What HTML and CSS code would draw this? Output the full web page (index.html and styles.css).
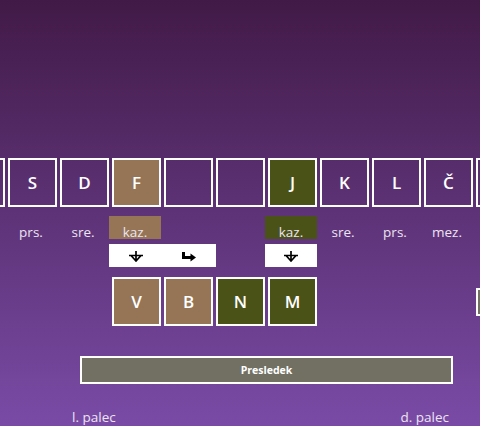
FILE: index.html
```html
<!DOCTYPE html>
<html lang="sl">
<head>
    <meta charset="UTF-8">
    <meta name="viewport" content="width=device-width, initial-scale=1.0">
    <title>Tipkovnica</title>
    <link rel="stylesheet" href="styles.css">
</head>
<body>

    <div class="keyboard">
        <!-- domaca vrsta -->
        <div class="keys home">
            <div class="key"></div>
            <div class="key">S</div>
            <div class="key">D</div>
            <div class="key brown">F</div>
            <div class="key"></div>
            <div class="key"></div>
            <div class="key olive">J</div>
            <div class="key">K</div>
            <div class="key">L</div>
            <div class="key">Č</div>
            <div class="key"></div>
        </div>

        <div class="labels">
            <div class="label"></div>
            <div class="label">prs.</div>
            <div class="label">sre.</div>
            <div class="label brown">kaz.</div>
            <div class="label"></div>
            <div class="label"></div>
            <div class="label olive">kaz.</div>
            <div class="label">sre.</div>
            <div class="label">prs.</div>
            <div class="label">mez.</div>
            <div class="label"></div>
        </div>

        <div class="arrows">
            <div class="arrow-box wide">
                <span class="arrow">
                    <svg width="16" height="11" viewBox="0 0 16 11"><path d="M8 0V10M1 4.5H15M3 4.5L8 10L13 4.5" fill="none" stroke="#000" stroke-width="1.7"/></svg>
                </span>
                <span class="arrow">
                    <svg width="16" height="10" viewBox="0 0 16 10"><path d="M2.5 0V5.5H10" fill="none" stroke="#000" stroke-width="3"/><path d="M9.5 1.5L15 5.5L9.5 9.5Z" fill="#000"/></svg>
                </span>
            </div>
            <div class="arrow-box single">
                <span class="arrow">
                    <svg width="16" height="11" viewBox="0 0 16 11"><path d="M8 0V10M1 4.5H15M3 4.5L8 10L13 4.5" fill="none" stroke="#000" stroke-width="1.7"/></svg>
                </span>
            </div>
        </div>

        <!-- spodnja vrsta -->
        <div class="keys bottom">
            <div class="key ghost"></div>
            <div class="key ghost"></div>
            <div class="key ghost"></div>
            <div class="key brown">V</div>
            <div class="key brown">B</div>
            <div class="key olive">N</div>
            <div class="key olive">M</div>
            <div class="key ghost"></div>
            <div class="key ghost"></div>
            <div class="key ghost"></div>
            <div class="key small gray"></div>
        </div>

        <div class="space-row">
            <div class="space">Presledek</div>
        </div>

        <div class="thumbs">
            <span>l. palec</span>
            <span>d. palec</span>
        </div>
    </div>

</body>
</html>
```
FILE: styles.css
```css
html, body {
    margin: 0;
    height: 100%;
}

body {
    background: linear-gradient(to bottom, #421a47, #7a4ba6);
    font-family: "Open Sans", "Noto Sans", sans-serif;
    color: #fff;
    overflow: hidden;
}

.keyboard {
    padding-top: 158px;
}

.keys {
    display: flex;
    gap: 3px;
    margin-left: -44px;
    align-items: center;
}

.key {
    flex: 0 0 49px;
    height: 49px;
    box-sizing: border-box;
    border: 2px solid #fff;
    display: flex;
    align-items: center;
    justify-content: center;
    font-size: 17px;
    font-weight: 600;
}

.key.brown { background-color: #957556; }
.key.olive { background-color: #4b5217; }
.key.gray { background-color: #727063; }
.key.ghost { visibility: hidden; }
.key.small { height: 28px; }

.bottom {
    margin-top: 10px;
}

.labels,
.arrows {
    display: grid;
    grid-template-columns: repeat(11, 52px);
    margin-left: -47px;
}

.labels {
    margin-top: 9px;
}

.label {
    height: 23px;
    box-sizing: border-box;
    padding-top: 9px;
    line-height: 14px;
    text-align: center;
    font-size: 13.5px;
    color: #ece4f2;
}

.label.brown { background-color: #957556; }
.label.olive { background-color: #4b5217; }

.arrows {
    margin-top: 5px;
    height: 23px;
}

.arrow-box {
    background: #fff;
    display: flex;
    height: 23px;
}

.arrow-box.wide {
    grid-column: 4 / span 2;
    width: 107px;
}

.arrow-box.single {
    grid-column: 7;
}

.arrow {
    flex: 1;
    display: flex;
    align-items: center;
    justify-content: center;
}

.arrow svg {
    display: block;
    margin-top: 2px;
}

.space-row {
    margin-top: 30px;
    padding-left: 80px;
}

.space {
    width: 373px;
    height: 28px;
    box-sizing: border-box;
    border: 2px solid #fff;
    background-color: #727063;
    display: flex;
    align-items: center;
    justify-content: center;
    font-size: 10.5px;
    font-weight: 700;
}

.thumbs {
    display: flex;
    justify-content: space-between;
    margin-top: 24px;
    padding: 0 31px 0 72px;
    font-size: 13.5px;
    line-height: 18px;
    color: #ece4f2;
}
```
